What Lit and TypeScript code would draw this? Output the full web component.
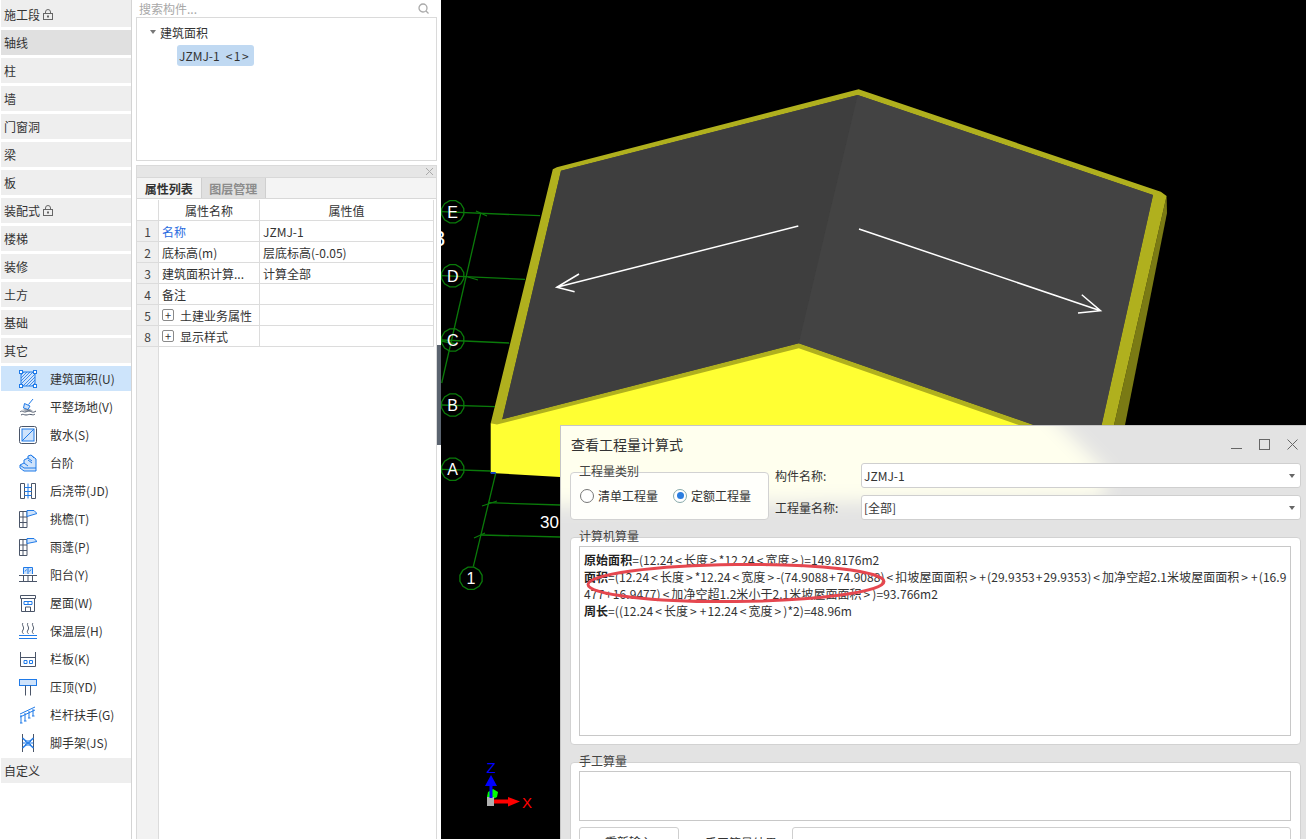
import { LitElement, css, html, svg } from "lit";
import { customElement } from "lit/decorators.js";

const DARK = "#4a5568";
const BLUE = "#1f7ae8";
const PALE = "#cfe3fb";

const navTop = [
  { name: "施工段", lock: true },
  { name: "轴线", active: true },
  { name: "柱" },
  { name: "墙" },
  { name: "门窗洞" },
  { name: "梁" },
  { name: "板" },
  { name: "装配式", lock: true },
  { name: "楼梯" },
  { name: "装修" },
  { name: "土方" },
  { name: "基础" },
  { name: "其它" },
];

const hatch = svg`
  <rect x="2" y="2" width="14" height="14" fill="${PALE}" stroke="${BLUE}"/>
  <path d="M2 5 5 2M2 8 8 2M2 11 11 2M2 14 14 2M4 16 16 4M7 16 16 7M10 16 16 10M13 16 16 13" stroke="${BLUE}" stroke-width=".8" fill="none"/>
  <g fill="#fff" stroke="${BLUE}">
    <rect x=".5" y=".5" width="3" height="3"/><rect x="14.5" y=".5" width="3" height="3"/>
    <rect x=".5" y="14.5" width="3" height="3"/><rect x="14.5" y="14.5" width="3" height="3"/>
  </g>`;

const eave = (drop: number) => svg`
  <path d="M.5 1.500h7.500v16h-7.500zM.5 7h7.500M.5 12.500h7.500M4 1.500v16" fill="none" stroke="${DARK}"/>
  <path d="M8 .5h7l3 3-10 ${drop}z" fill="${PALE}" stroke="${BLUE}"/>`;

const subItems = [
  { name: "建筑面积(U)", icon: hatch },
  {
    name: "平整场地(V)",
    icon: svg`
      <path d="M14 1 9.500 6.500" stroke="${BLUE}" fill="none"/>
      <path d="M5.500 5.500l5.500 2.500-2 3.500-4.500-1.500z" fill="${PALE}" stroke="${BLUE}"/>
      <path d="M1 14c2-2 3 0 5 0s3-2 5-1 3 2 6 0M2 17c2-1.500 3 0 5 0s3-1 5-.5 3 .5 4-.5" fill="none" stroke="${DARK}"/>
      <path d="M3 12l3-1 5 0 3 2-5 1z" fill="${DARK}" opacity=".5"/>`,
  },
  {
    name: "散水(S)",
    icon: svg`
      <rect x=".5" y=".5" width="17" height="17" rx="2" fill="none" stroke="${DARK}"/>
      <rect x="3" y="3" width="12" height="12" fill="${PALE}" stroke="${BLUE}"/>
      <path d="M3 15 15 3" stroke="${BLUE}"/>`,
  },
  {
    name: "台阶",
    icon: svg`
      <path d="M1 11l4-2V6l4-2V2l3-1 5 4v12H5l-4-3z" fill="${PALE}" stroke="${BLUE}"/>
      <path d="M1 11l4 3 12 0M5 9l4 3M9 6l4 3M9 4l4 3M12 1l3 3" fill="none" stroke="${BLUE}"/>`,
  },
  {
    name: "后浇带(JD)",
    icon: svg`
      <path d="M1.500 1.500h4v15h-4zM12.500 1.500h4v15h-4z" fill="none" stroke="${DARK}"/>
      <path d="M5.500 5.500h7M5.500 9.500h7M5.500 13.500h7M9 1.500v15" fill="none" stroke="${BLUE}"/>`,
  },
  { name: "挑檐(T)", icon: eave(3) },
  { name: "雨蓬(P)", icon: eave(2) },
  {
    name: "阳台(Y)",
    icon: svg`
      <path d="M4.500 8V1.500h9V8M9 1.500V8" fill="${PALE}" stroke="${BLUE}"/>
      <path d="M6 5.500l1.500-2M10.500 5.500l1.500-2" stroke="${BLUE}"/>
      <path d="M0 9.500h18M0 15.500h18M4.500 9.500v6M9 9.500v6M13.500 9.500v6" fill="none" stroke="${DARK}"/>`,
  },
  {
    name: "屋面(W)",
    icon: svg`
      <path d="M1.500 1.500h15v3h-15zM2.500 4.500v13h13v-13" fill="none" stroke="${DARK}"/>
      <path d="M5 7.500h8M5 7.500v3h8v-3M9 7.500v3" fill="none" stroke="${BLUE}"/>
      <path d="M6.500 17.500v-4.500h5v4.500" fill="none" stroke="${DARK}"/>`,
  },
  {
    name: "保温层(H)",
    icon: svg`
      <path d="M4 1c-2 2 2 4 0 7s1 3 0 4M9 1c-2 2 2 4 0 7s1 3 0 4M14 1c-2 2 2 4 0 7s1 3 0 4" fill="none" stroke="${DARK}"/>
      <path d="M0 13.500h18M0 16.500h18" stroke="${BLUE}"/>`,
  },
  {
    name: "栏板(K)",
    icon: svg`
      <path d="M1.500 2v14.500h15V2M1.500 7.500h15" fill="none" stroke="${DARK}"/>
      <path d="M5 10.500h3v3H5zM10.500 10.500h3v3h-3z" fill="none" stroke="${BLUE}"/>`,
  },
  {
    name: "压顶(YD)",
    icon: svg`
      <rect x=".5" y="1.500" width="17" height="6" fill="${PALE}" stroke="${BLUE}"/>
      <path d="M6.500 7.500v10M11.500 7.500v10" stroke="${DARK}"/>`,
  },
  {
    name: "栏杆扶手(G)",
    icon: svg`
      <path d="M1 8 16 1M1 11 16 4" fill="none" stroke="${BLUE}"/>
      <path d="M2 9v8M1 17h2.500M6 7v8M5 15h2.500M10 5v7M9 12h2.500M14 3v7M13 10h2.500" fill="none" stroke="${BLUE}"/>`,
  },
  {
    name: "脚手架(JS)",
    icon: svg`
      <path d="M3.500 0v18M14.500 0v18" stroke="${DARK}"/>
      <path d="M3.500 4 14.500 14M14.500 4 3.500 14" stroke="${BLUE}" stroke-width="1.500"/>
      <path d="M3.500 9h11" stroke="${BLUE}"/>
      <path d="M6 7h6l-3 2zM6 11h6l-3-2z" fill="${PALE}" stroke="${BLUE}"/>`,
  },
];

const rows = [
  { no: "1", name: "名称", value: "JZMJ-1", link: true },
  { no: "2", name: "底标高(m)", value: "层底标高(-0.05)" },
  { no: "3", name: "建筑面积计算...", value: "计算全部" },
  { no: "4", name: "备注", value: "" },
  { no: "5", name: "土建业务属性", value: "", group: true },
  { no: "8", name: "显示样式", value: "", group: true },
];

const axes = [
  { label: "E", x: 452.7, y: 211.7, tx: 540, ty: 215.7 },
  { label: "D", x: 452.7, y: 275.7, tx: 525, ty: 279.3 },
  { label: "C", x: 452.7, y: 340, tx: 509.3, ty: 343 },
  { label: "B", x: 452.7, y: 405, tx: 495, ty: 406.7 },
  { label: "A", x: 452.7, y: 469.3, tx: 490.7, ty: 471 },
  { label: "1", x: 471, y: 578.3, tx: 0, ty: 0 },
];

// 12-sided bubble, the CAD view draws its axis circles coarse
const bubble = (cx: number, cy: number) =>
  Array.from({ length: 12 }, (_, i) => {
    const a = (i * Math.PI) / 6 + Math.PI / 12;
    return `${(cx + 11.5 * Math.cos(a)).toFixed(1)},${(cy + 11.5 * Math.sin(a)).toFixed(1)}`;
  }).join(" ");

// the formula font sets brackets and plus signs wider than ours does
const formula = (text: string) =>
  text.split(/([<>+])/).map((part) => {
    if (part === "<" || part === ">") return html`<span class="angle">${part}</span>`;
    if (part === "+") return html`<span class="add">${part}</span>`;
    return part;
  });

const lockIcon = html`<svg class="lock" width="10" height="11" viewBox="0 0 10 11">
  <path d="M2.500 4.500V3a2.500 2.500 0 0 1 5 0v1.500" fill="none" stroke="#666"/>
  <rect x=".5" y="4.500" width="9" height="6" fill="none" stroke="#666"/>
  <rect x="4" y="6.500" width="2" height="2" fill="#666"/>
</svg>`;

@customElement("app-root")
export class AppRoot extends LitElement {
  static styles = css`
    :host {
      display: grid;
      grid-template-columns: 132px 4px 301px 4px 1fr;
      width: 1306px;
      height: 839px;
      overflow: hidden;
      background: #fff;
      color: #333;
      font-family: "Noto Sans CJK SC", "Liberation Sans", sans-serif;
      font-size: 12px;
    }

    /* left nav */
    .nav {
      display: flex;
      flex-direction: column;
      gap: 3px;
      padding-left: 1px;
      border-right: 1px solid #d4d4d4;
      overflow: hidden;
    }
    .nav-row {
      display: flex;
      align-items: center;
      flex: 0 0 25px;
      padding-left: 3px;
      background: #eeeeee;
    }
    .nav-row:first-child {
      flex-basis: 25px;
      padding-top: 2px;
    }
    .nav-row.active {
      background: #e0e0e0;
    }
    .lock {
      margin-left: 3px;
    }
    .sub-row {
      display: flex;
      align-items: center;
      flex: 0 0 25px;
      padding-left: 18px;
    }
    .sub-row.selected {
      background: #cde4fb;
    }
    .sub-row svg {
      flex: none;
      margin-right: 13px;
    }

    /* component tree and properties */
    .middle {
      display: flex;
      flex-direction: column;
      min-height: 0;
    }
    .search {
      display: flex;
      align-items: center;
      justify-content: space-between;
      flex: 0 0 17px;
      padding: 0 8px 0 3px;
      color: #a8a8a8;
    }
    .tree {
      flex: 0 0 144px;
      box-sizing: border-box;
      border: 1px solid #dadada;
      padding-top: 3px;
    }
    .tree-root {
      display: flex;
      align-items: center;
      height: 22px;
      padding-left: 13px;
    }
    .caret {
      width: 0;
      height: 0;
      margin-right: 4px;
      border: 3px solid transparent;
      border-top: 4px solid #777;
      border-bottom: 0;
    }
    .tree-node {
      display: inline-flex;
      align-items: center;
      gap: 6px;
      height: 21px;
      margin: 2px 0 0 40px;
      padding: 0 4px 0 2px;
      border-radius: 3px;
      background: #c0d9f2;
    }
    .tree-node .count {
      letter-spacing: 1.5px;
    }
    .panel {
      display: flex;
      flex-direction: column;
      flex: 1;
      min-height: 0;
      margin-top: 4px;
      border: 1px solid #dadada;
      border-width: 1px 1px 0;
    }
    .panel-head {
      display: flex;
      align-items: center;
      justify-content: flex-end;
      flex: 0 0 11px;
      padding-right: 3px;
      background: #e6e6e6;
    }
    .tabs {
      display: flex;
      flex: 0 0 22px;
      box-sizing: border-box;
      border-top: 1px solid #d8d8d8;
      border-bottom: 1px solid #d8d8d8;
      background: #f4f4f4;
    }
    .tab {
      display: flex;
      align-items: center;
      justify-content: center;
      box-sizing: border-box;
      width: 64.5px;
      font-weight: 700;
      border-right: 1px solid #cfcfcf;
    }
    .tab.off {
      background: #e0e0e0;
      color: #8c8c8c;
    }
    .table {
      display: grid;
      grid-template-columns: 22px 101px 174px;
      grid-auto-rows: 21px;
      padding-top: 1px;
    }
    .cell {
      display: flex;
      align-items: center;
      padding-left: 3px;
      border-right: 1px solid #dcdcdc;
      border-bottom: 1px solid #dcdcdc;
      white-space: nowrap;
      overflow: hidden;
    }
    .cell.head {
      justify-content: center;
      padding-left: 0;
    }
    .cell.no {
      justify-content: center;
      padding-left: 0;
      background: #efefef;
      color: #444;
    }
    .cell.link {
      color: #2a6ce0;
    }
    .plus {
      display: flex;
      align-items: center;
      justify-content: center;
      box-sizing: border-box;
      width: 12px;
      height: 12px;
      margin-right: 6px;
      border: 1px solid #8a8a8a;
      border-radius: 2px;
      font-size: 11px;
      line-height: 1;
    }
    .filler {
      flex: 1;
      width: 21px;
      background: #f2f2f2;
      border-right: 1px solid #dcdcdc;
    }

    .splitter {
      display: flex;
      align-items: center;
    }
    .splitter div {
      width: 4px;
      height: 100px;
      margin-top: -50px;
      background: #5b6470;
    }

    /* 3d view */
    .view {
      position: relative;
      background: #000;
      overflow: hidden;
    }
    .view > svg {
      display: block;
    }
    .dialog {
      position: absolute;
      left: 119px;
      top: 425px;
      right: 0;
      height: 440px;
      box-sizing: border-box;
      padding: 0 5px 0 9px;
      border: 1px solid #c6c6c6;
      border-right: 0;
      background: #e3e3e3;
      overflow: hidden;
    }
    .tint {
      position: absolute;
      left: 0;
      top: 0;
    }
    .dialog-body {
      position: relative;
    }
    .title-bar {
      display: flex;
      align-items: center;
      justify-content: space-between;
      height: 36px;
      padding: 0 3px 0 1px;
      margin-bottom: 10px;
      font-size: 14px;
    }
    .win-buttons {
      display: flex;
      gap: 17px;
    }
    .top {
      display: flex;
      gap: 6px;
    }
    .group {
      border: 1px solid #d2d2d2;
      border-radius: 4px;
      background: #fff;
      margin-bottom: 17px;
    }
    .group.kind {
      flex: 0 0 197px;
      height: 46px;
      background: #fffffb;
    }
    .legend {
      height: 16px;
      margin: -10px 0 2px 8px;
      line-height: 16px;
      color: #444;
    }
    .radios {
      display: flex;
      gap: 15px;
      margin: 8px 0 0 9px;
    }
    .radio {
      display: flex;
      align-items: center;
      gap: 4px;
    }
    .dot {
      position: relative;
      box-sizing: border-box;
      width: 14px;
      height: 14px;
      border: 1px solid #777;
      border-radius: 50%;
      background: #fff;
    }
    .dot.on {
      border-color: #8aa;
    }
    .dot.on::after {
      content: "";
      position: absolute;
      inset: 2.500px;
      border-radius: 50%;
      background: #2b7de0;
    }
    .form {
      display: flex;
      flex: 1;
      flex-direction: column;
      gap: 7px;
      margin-top: -9px;
    }
    .form-row {
      display: flex;
      align-items: center;
    }
    .form-row label {
      flex: 0 0 86px;
    }
    .select {
      display: flex;
      flex: 1;
      align-items: center;
      justify-content: space-between;
      box-sizing: border-box;
      height: 25px;
      padding: 0 5px 0 2px;
      border: 1px solid #cfcfcf;
      border-radius: 3px;
      background: #fff;
    }
    .select i {
      width: 0;
      height: 0;
      border: 3px solid transparent;
      border-top: 4px solid #666;
      border-bottom: 0;
    }
    .calc {
      height: 206px;
    }
    .box {
      position: relative;
      box-sizing: border-box;
      margin: 0 9px 0 8px;
      border: 1px solid #c8c8c8;
      background: #fff;
    }
    .calc .box {
      height: 190px;
      padding: 4px 4px;
      line-height: 17px;
      letter-spacing: 0.05px;
      white-space: nowrap;
    }
    .calc b {
      font-weight: 700;
      color: #222;
    }
    .angle {
      margin: 0 2px;
    }
    .add {
      margin: 0 1px;
    }
    .ellipse {
      position: absolute;
      left: 4px;
      top: 15px;
      pointer-events: none;
    }
    .manual .box {
      height: 50px;
    }
    .manual-row {
      display: flex;
      align-items: center;
      margin: 6px 9px 0 8px;
    }
    .btn {
      flex: 0 0 98px;
      height: 28px;
      line-height: 28px;
      text-align: center;
      border: 1px solid #cfcfcf;
      border-radius: 3px;
    }
    .manual-row span {
      flex: 0 0 113px;
      box-sizing: border-box;
      padding-left: 26px;
      white-space: nowrap;
    }
    .manual-row .result {
      flex: 1;
      height: 28px;
      border: 1px solid #cfcfcf;
      border-radius: 3px;
    }
  `;

  private renderScene() {
    return html`<svg width="865" height="839" viewBox="441 0 865 839" font-family="Liberation Sans, sans-serif">
      <!-- slab -->
      <path d="M490.700 423.300 798.800 345 1060 425 1060 480 560 477 490.700 473z" fill="#ffff33"/>
      <path d="M1166.600 196 1167 213 1125 425 1122 440 1110.600 440z" fill="#7a7a14"/>
      <path d="M1166.600 196 1160.800 191.700 858.600 89.300 556.800 167.300 552.800 169.300 490.700 423.300 497 424.500 798.800 348.300 1060 439.400 1110.600 440z" fill="#b0b01e"/>
      <path d="M857.700 95 561 170.700 502.300 419.300 798.800 343.300 1048 430 1100.500 430 1153 195z" fill="#404040"/>
      <path d="M857.700 95 561 170.700 502.300 419.300 798.800 343.300z" fill="#3e3e3e"/>
      <path d="M857.700 95 1153 195 1100.500 430 1048 430 798.800 343.300z" fill="#434343"/>
      <!-- span arrows -->
      <g stroke="#fff" stroke-width="1.500" fill="none">
        <path d="M798.300 226 556.800 287.300M579 274 556.800 287.300 574.600 291.700"/>
        <path d="M859 229 1100.500 310.700M1081.800 294.700 1100.500 310.700 1078 313"/>
      </g>
      <!-- axis grid -->
      <g stroke="#0a7a0a" stroke-width="1.300" fill="none">
        ${axes
          .filter((a) => a.tx)
          .map((a) => svg`<path d="M441.700 ${a.y}L${a.tx} ${a.ty}"/>`)}
        <path d="M480.700 213.300 441.700 383"/>
        <path d="M495.700 473.300 473.300 566.700"/>
        <path d="M488.300 502.700 560 505M480.700 535 560 537"/>
        <path d="M476 211 487 216M468 277 478 280M441 341 456 344"/>
        <path d="M482 506 497 501M474 538 485 533"/>
        ${axes.map((a) => svg`<polygon points="${bubble(a.x, a.y)}"/>`)}
      </g>
      <g fill="#fff" font-size="16" text-anchor="middle">
        ${axes.map((a) => svg`<text x="${a.x}" y="${a.y + 6}">${a.label}</text>`)}
      </g>
      <text x="540" y="528" fill="#fff" font-size="17">30</text>
      <text x="433" y="246" fill="#fff" font-size="22">3</text>
      <rect x="490.700" y="472" width="5" height="2" fill="#1040c0"/>
      <!-- axis gizmo -->
      <path d="M487 797l1-5 5-3 5 3-1 5-4 2z" fill="#00ff00"/>
      <rect x="487" y="797" width="7" height="9" fill="#b0b0b0"/>
      <path d="M489.500 798V786H485L491 775 497 786H492.500V798z" fill="#0000ff"/>
      <path d="M494 799.500H508V797L520 801.500 508 806.500V803.500H494z" fill="#ff0000"/>
      <text x="491" y="773" fill="#0000ff" font-size="15" text-anchor="middle">Z</text>
      <text x="527" y="808" fill="#ff0000" font-size="15" text-anchor="middle">X</text>
    </svg>`;
  }

  private renderDialog() {
    return html`<div class="dialog">
      <svg class="tint" width="746" height="120">
        <defs>
          <filter id="soft" x="-20%" y="-40%" width="140%" height="180%">
            <feGaussianBlur stdDeviation="9"/>
          </filter>
        </defs>
        <polygon points="-30,-30 470,-30 548,48 540,72 -30,80" fill="#ffffee" filter="url(#soft)"/>
      </svg>
      <div class="dialog-body">
        <div class="title-bar">
          <span>查看工程量计算式</span>
          <div class="win-buttons">
            <svg width="11" height="11" viewBox="0 0 11 11"><path d="M0 9.500h11" stroke="#666"/></svg>
            <svg width="11" height="11" viewBox="0 0 11 11"><rect x=".5" y=".5" width="10" height="10" fill="none" stroke="#666"/></svg>
            <svg width="11" height="11" viewBox="0 0 11 11"><path d="M.5 .5 10.500 10.500M10.500 .5 .5 10.500" stroke="#666"/></svg>
          </div>
        </div>
        <div class="top">
          <div class="group kind">
            <div class="legend">工程量类别</div>
            <div class="radios">
              <div class="radio"><div class="dot"></div>清单工程量</div>
              <div class="radio"><div class="dot on"></div>定额工程量</div>
            </div>
          </div>
          <div class="form">
            <div class="form-row">
              <label>构件名称:</label>
              <div class="select">JZMJ-1<i></i></div>
            </div>
            <div class="form-row">
              <label>工程量名称:</label>
              <div class="select">[全部]<i></i></div>
            </div>
          </div>
        </div>
        <div class="group calc">
          <div class="legend">计算机算量</div>
          <div class="box">
            <div><b>原始面积</b>${formula("=(12.24<长度>*12.24<宽度>)=149.8176m2")}</div>
            <div><b>面积</b>${formula("=(12.24<长度>*12.24<宽度>-(74.9088+74.9088)<扣坡屋面面积>+(29.9353+29.9353)<加净空超2.1米坡屋面面积>+(16.9")}</div>
            <div>${formula("477+16.9477)<加净空超1.2米小于2.1米坡屋面面积>)=93.766m2")}</div>
            <div><b>周长</b>${formula("=((12.24<长度>+12.24<宽度>)*2)=48.96m")}</div>
            <svg class="ellipse" width="304" height="44" viewBox="0 0 304 44">
              <ellipse cx="152" cy="21" rx="148" ry="18.500" fill="none" stroke="#e5474f" stroke-width="3" transform="rotate(-0.6 152 21)"/>
            </svg>
          </div>
        </div>
        <div class="group manual">
          <div class="legend">手工算量</div>
          <div class="box"></div>
          <div class="manual-row">
            <div class="btn">重新输入</div>
            <span>手工算量结果</span>
            <div class="result"></div>
          </div>
        </div>
      </div>
    </div>`;
  }

  render() {
    return html`
      <div class="nav">
        ${navTop.map(
          (n) => html`<div class="nav-row ${n.active ? "active" : ""}">${n.name}${n.lock ? lockIcon : ""}</div>`
        )}
        ${subItems.map(
          (s, i) => html`<div class="sub-row ${i === 0 ? "selected" : ""}">
            <svg width="18" height="18" viewBox="0 0 18 18">${s.icon}</svg>${s.name}
          </div>`
        )}
        <div class="nav-row">自定义</div>
      </div>
      <div></div>
      <div class="middle">
        <div class="search">
          <span>搜索构件...</span>
          <svg width="11" height="11" viewBox="0 0 11 11">
            <circle cx="5" cy="5" r="4" fill="none" stroke="#aaa" stroke-width="1.300"/>
            <path d="M8 8l2.500 2.500" stroke="#aaa" stroke-width="1.300"/>
          </svg>
        </div>
        <div class="tree">
          <div class="tree-root"><i class="caret"></i>建筑面积</div>
          <div class="tree-node"><span>JZMJ-1</span><span class="count">&lt;1&gt;</span></div>
        </div>
        <div class="panel">
          <div class="panel-head">
            <svg width="7" height="7" viewBox="0 0 7 7"><path d="M0 0 7 7M7 0 0 7" stroke="#aaa"/></svg>
          </div>
          <div class="tabs">
            <div class="tab">属性列表</div>
            <div class="tab off">图层管理</div>
          </div>
          <div class="table">
            <div class="cell head"></div>
            <div class="cell head">属性名称</div>
            <div class="cell head">属性值</div>
            ${rows.map(
              (r) => html`
                <div class="cell no">${r.no}</div>
                <div class="cell ${r.link ? "link" : ""}">
                  ${r.group ? html`<span class="plus">+</span>` : ""}${r.name}
                </div>
                <div class="cell">${r.value}</div>
              `
            )}
          </div>
          <div class="filler"></div>
        </div>
      </div>
      <div class="splitter"><div></div></div>
      <div class="view">${this.renderScene()}${this.renderDialog()}</div>
    `;
  }
}

declare global {
  interface HTMLElementTagNameMap {
    "app-root": AppRoot;
  }
}
